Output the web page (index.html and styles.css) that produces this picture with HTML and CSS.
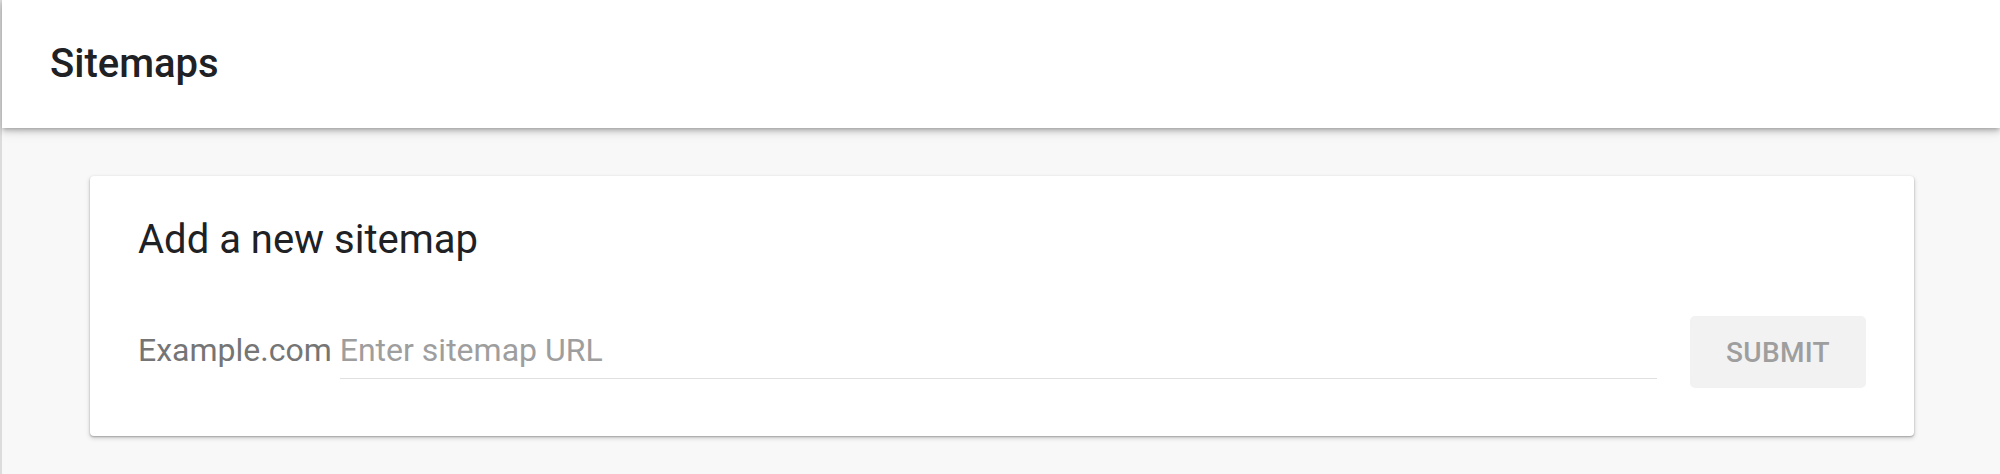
FILE: index.html
```html
<!DOCTYPE html>
<html lang="en">
<head>
<meta charset="utf-8">
<title>Sitemaps</title>
<link rel="stylesheet" href="styles.css">
</head>
<body>
<div class="page">
  <header class="topbar">
    <h1 class="topbar-title">Sitemaps</h1>
  </header>
  <main class="content">
    <section class="card">
      <h2 class="card-title">Add a new sitemap</h2>
      <form class="add-row">
        <span class="prefix">Example.com</span>
        <div class="field">
          <input class="field-input" type="text" placeholder="Enter sitemap URL">
        </div>
        <button class="submit" type="button">SUBMIT</button>
      </form>
    </section>
  </main>
</div>
</body>
</html>
```

FILE: styles.css
```css
html, body {
  margin: 0;
  padding: 0;
}

body {
  font-family: Roboto, "Liberation Sans", Arial, sans-serif;
  background: #f8f8f8;
  color: #212121;
}

.page {
  min-height: 474px;
  border-left: 2px solid #dcdcdc;
  background: #f8f8f8;
  box-sizing: border-box;
}

.topbar {
  position: relative;
  z-index: 1;
  height: 128px;
  box-sizing: border-box;
  padding: 40px 47px 0 48px;
  background: #ffffff;
  box-shadow: 0 2px 4px -1px rgba(0, 0, 0, 0.22),
              0 4px 6px 0 rgba(0, 0, 0, 0.14),
              0 2px 14px 0 rgba(0, 0, 0, 0.10);
}

.topbar-title {
  margin: 0;
  font-size: 40px;
  line-height: 48px;
  font-weight: 500;
  color: #202124;
}

.content {
  padding: 48px 86px 0 88px;
}

.card {
  background: #ffffff;
  border-radius: 4px;
  padding: 40px 48px 48px 48px;
  box-shadow: 0 1px 2px rgba(0, 0, 0, 0.28),
              0 2px 4px 1px rgba(0, 0, 0, 0.12);
}

.card-title {
  margin: 0;
  font-size: 40px;
  line-height: 48px;
  font-weight: 400;
  color: #202124;
}

.add-row {
  display: flex;
  align-items: flex-start;
  margin: 52px 0 0 0;
}

.prefix {
  margin-top: 14px;
  font-size: 32px;
  line-height: 40px;
  color: #757575;
  white-space: nowrap;
}

.field {
  flex: 1;
  margin: 14px 0 0 8px;
  padding-bottom: 8px;
  border-bottom: 1px solid #e0e0e0;
}

.field-input {
  display: block;
  width: 100%;
  height: 40px;
  margin: 0;
  padding: 0;
  border: none;
  outline: none;
  background: transparent;
  font-family: inherit;
  font-size: 32px;
  line-height: 40px;
  color: #202124;
}

.field-input::placeholder {
  color: #9e9e9e;
  opacity: 1;
}

.submit {
  flex: none;
  width: 176px;
  height: 72px;
  margin-left: 33px;
  padding: 0;
  border: none;
  border-radius: 5px;
  background: #f2f2f2;
  color: #9e9e9e;
  font-family: inherit;
  font-size: 28px;
  font-weight: 500;
  letter-spacing: 0.3px;
}
```
